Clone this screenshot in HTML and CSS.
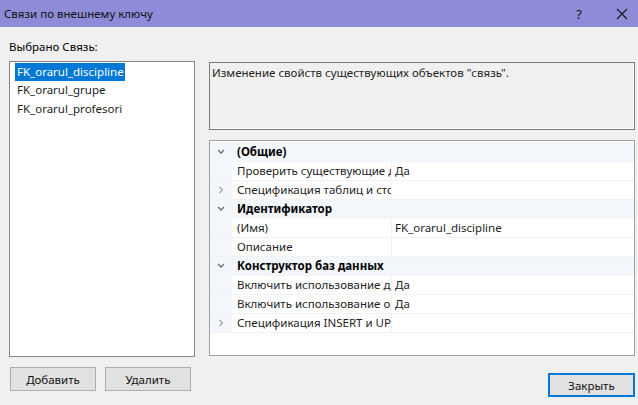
FILE: index.html
```html
<!DOCTYPE html>
<html lang="ru">
<head>
<meta charset="utf-8">
<link rel="stylesheet" href="styles.css">
</head>
<body>
<div class="window">
  <div class="titlebar">
    <span class="title">Связи по внешнему ключу</span>
    <span class="help">?</span>
    <span class="close"><svg width="12" height="12" viewBox="0 0 12 12"><path d="M1 1L11 11M11 1L1 11" stroke="#1a1a1a" stroke-width="1.2" fill="none"/></svg></span>
  </div>
  <div class="label">Выбрано Связь:</div>
  <div class="main">
    <div class="list">
      <div class="item"><span class="selected">FK_orarul_discipline</span></div>
      <div class="item"><span>FK_orarul_grupe</span></div>
      <div class="item"><span>FK_orarul_profesori</span></div>
    </div>
    <div class="right">
      <div class="desc">Изменение свойств существующих объектов "связь".</div>
      <div class="grid">
        <div class="row cat"><span class="gut"><svg width="8" height="6" viewBox="0 0 8 6"><path d="M1 1L4 4L7 1" stroke="#6b6b6b" stroke-width="1.3" fill="none"/></svg></span><span class="catname">(Общие)</span></div>
        <div class="row"><span class="gut"></span><span class="name">Проверить существующие д</span><span class="val">Да</span></div>
        <div class="row"><span class="gut"><svg width="6" height="8" viewBox="0 0 6 8"><path d="M1.5 1L4.5 4L1.5 7" stroke="#a0a0a0" stroke-width="1.2" fill="none"/></svg></span><span class="name">Спецификация таблиц и сто</span><span class="val"></span></div>
        <div class="row cat"><span class="gut"><svg width="8" height="6" viewBox="0 0 8 6"><path d="M1 1L4 4L7 1" stroke="#6b6b6b" stroke-width="1.3" fill="none"/></svg></span><span class="catname">Идентификатор</span></div>
        <div class="row"><span class="gut"></span><span class="name">(Имя)</span><span class="val">FK_orarul_discipline</span></div>
        <div class="row"><span class="gut"></span><span class="name">Описание</span><span class="val"></span></div>
        <div class="row cat"><span class="gut"><svg width="8" height="6" viewBox="0 0 8 6"><path d="M1 1L4 4L7 1" stroke="#6b6b6b" stroke-width="1.3" fill="none"/></svg></span><span class="catname">Конструктор баз данных</span></div>
        <div class="row"><span class="gut"></span><span class="name">Включить использование д</span><span class="val">Да</span></div>
        <div class="row"><span class="gut"></span><span class="name">Включить использование о</span><span class="val">Да</span></div>
        <div class="row"><span class="gut"><svg width="6" height="8" viewBox="0 0 6 8"><path d="M1.5 1L4.5 4L1.5 7" stroke="#a0a0a0" stroke-width="1.2" fill="none"/></svg></span><span class="name">Спецификация INSERT и UPD</span><span class="val"></span></div>
      </div>
    </div>
  </div>
  <div class="bottom">
    <button class="btn">Добавить</button>
    <button class="btn">Удалить</button>
    <button class="btn primary">Закрыть</button>
  </div>
</div>
</body>
</html>
```
FILE: styles.css
```css
* { box-sizing: border-box; }
html, body { margin: 0; padding: 0; }
body {
  width: 638px;
  height: 405px;
  background: #f0f0f0;
  font-family: "Noto Sans", "Open Sans", sans-serif;
  font-size: 11.5px;
  color: #000;
  overflow: hidden;
}
.window { display: flex; flex-direction: column; height: 405px; }
.titlebar {
  height: 27px;
  background: #8e8cd8;
  display: flex;
  align-items: center;
  padding-left: 4px;
  color: #111;
}
.title { flex: 1; font-size: 11.5px; }
.help { width: 14px; margin-right: 30px; text-align: center; font-size: 13px; }
.close { width: 12px; height: 12px; margin-right: 10px; display: flex; }
.label { height: 34px; padding: 12px 0 0 9px; line-height: 16px; }
.main { display: flex; padding-left: 9px; gap: 14px; height: 296px; }
.list {
  width: 186px;
  height: 296px;
  background: #fff;
  border: 1px solid #828790;
  padding: 1px 0 0 5px;
}
.item { height: 18.4px; line-height: 18px; color: #1e1e1e; }
.item span { display: inline-block; height: 18px; padding: 0 1px 0 2px; }
.item .selected { background: #0078d7; color: #fff; }
.right { width: 426px; display: flex; flex-direction: column; gap: 10px; padding-top: 1px; }
.desc {
  height: 68px;
  border: 1px solid #7a7a7a;
  box-shadow: inset -1px -1px 0 #fff;
  padding: 2px 0 0 2px;
  line-height: 16px;
  color: #1e1e1e;
}
.grid {
  height: 216px;
  background: #fff;
  border: 1px solid #a0a0a0;
  padding-top: 1px;
}
.row { display: flex; height: 19px; line-height: 18px; border-bottom: 1px solid #f0f2f6; }
.row:first-child { height: 20px; line-height: 19px; }
.gut {
  width: 22px;
  flex: none;
  background: #f3f6fb;
  display: flex;
  align-items: center;
  justify-content: center;
}
.cat { background: #f3f6fb; border-bottom-color: #f3f6fb; }
.catname { font-weight: bold; padding-left: 5px; white-space: nowrap; }
.name {
  width: 160px;
  flex: none;
  padding-left: 5px;
  white-space: nowrap;
  overflow: hidden;
  border-right: 1px solid #f0f2f6;
  color: #1e1e1e;
}
.val { flex: 1; padding-left: 3px; white-space: nowrap; color: #1e1e1e; }
.bottom { display: flex; padding: 10px 0 0 10px; gap: 9px; align-items: flex-start; }
.btn {
  font-family: inherit;
  font-size: 11.5px;
  width: 86px;
  height: 24px;
  background: #e1e1e1;
  border: 1px solid #adadad;
  color: #111;
  padding: 0;
  margin: 0;
}
.btn.primary {
  margin-left: auto;
  margin-right: 3px;
  margin-top: 6px;
  width: 87px;
  border: 2px solid #0078d7;
}
```
